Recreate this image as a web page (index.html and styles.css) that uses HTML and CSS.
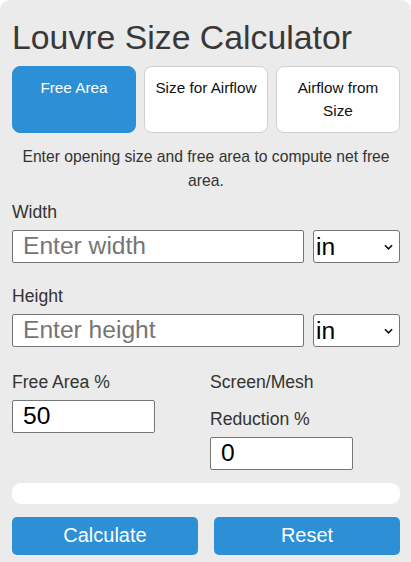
FILE: index.html
```html
<!DOCTYPE html>
<html lang="en">
<head>
<meta charset="utf-8">
<title>Louvre Size Calculator</title>
<link rel="stylesheet" href="styles.css">
</head>
<body>
<div class="calc">
  <h1 class="title">Louvre Size Calculator</h1>
  <div class="tabs">
    <button class="tab active">Free Area</button>
    <button class="tab">Size for Airflow</button>
    <button class="tab">Airflow from Size</button>
  </div>
  <p class="desc">Enter opening size and free area to compute net free area.</p>

  <div class="group">
    <label class="label">Width</label>
    <div class="row">
      <input class="field" type="text" placeholder="Enter width">
      <div class="select-wrap">
        <select class="unit"><option>in</option></select>
        <svg class="chev" viewBox="0 0 10 6" width="9" height="6"><path d="M1 1l4 4 4-4" fill="none" stroke="#111" stroke-width="1.8"/></svg>
      </div>
    </div>
  </div>

  <div class="group">
    <label class="label">Height</label>
    <div class="row">
      <input class="field" type="text" placeholder="Enter height">
      <div class="select-wrap">
        <select class="unit"><option>in</option></select>
        <svg class="chev" viewBox="0 0 10 6" width="9" height="6"><path d="M1 1l4 4 4-4" fill="none" stroke="#111" stroke-width="1.8"/></svg>
      </div>
    </div>
  </div>

  <div class="cols">
    <div class="col">
      <label class="label">Free Area %</label>
      <input class="field small" type="text" value="50">
    </div>
    <div class="col">
      <label class="label two"><span>Screen/Mesh</span><span>Reduction %</span></label>
      <input class="field small" type="text" value="0">
    </div>
  </div>

  <div class="result"></div>

  <div class="actions">
    <button class="btn">Calculate</button>
    <button class="btn">Reset</button>
  </div>
</div>
</body>
</html>
```
FILE: styles.css
```css
html, body {
  margin: 0;
  padding: 0;
  background: #ffffff;
}
body {
  font-family: "Liberation Sans", Arial, sans-serif;
  color: #333;
}
.calc {
  width: 411px;
  box-sizing: border-box;
  min-height: 580px;
  background: #eaebea;
  border-radius: 10px;
  padding: 18px 11px 0 12px;
}
.title {
  margin: 0;
  font-size: 33.8px;
  font-weight: normal;
  color: #383838;
  line-height: 38.6px;
}
.tabs {
  margin-top: 9px;
  display: grid;
  grid-template-columns: 1fr 1fr 1fr;
  gap: 8px;
}
.tab {
  font-family: inherit;
  font-size: 15.3px;
  line-height: 23px;
  padding: 9px 6px 10px;
  background: #fff;
  color: #111;
  border: 1px solid #d0d0d0;
  border-radius: 8px;
  text-align: center;
  align-self: stretch;
  display: flex;
  align-items: flex-start;
  justify-content: center;
  box-sizing: border-box;
  min-height: 66px;
}
.tab.active {
  background: #2d8fd5;
  border-color: #2d8fd5;
  color: #fff;
}
.desc {
  margin: 12px 0 0;
  font-size: 15.7px;
  line-height: 24px;
  text-align: center;
  color: #333;
}
.group {
  margin-top: 9px;
}
.group + .group {
  margin-top: 23px;
}
.label {
  display: block;
  font-size: 17.6px;
  line-height: 20px;
  color: #333;
  margin-bottom: 8px;
}
.label.two {
  display: flex;
  flex-direction: column;
  gap: 17px;
}
.row {
  display: flex;
  gap: 9px;
}
.field {
  flex: 1;
  min-width: 0;
  height: 33px;
  box-sizing: border-box;
  border: 1px solid #767676;
  border-radius: 2px;
  padding: 0 10px;
  font-family: inherit;
  font-size: 24.6px;
  color: #000;
  background: #fff;
}
.field::placeholder {
  color: #757575;
}
.select-wrap {
  position: relative;
  width: 87px;
}
.unit {
  appearance: none;
  -webkit-appearance: none;
  width: 100%;
  height: 33px;
  box-sizing: border-box;
  border: 1px solid #767676;
  border-radius: 3px;
  background: #fff;
  font-family: inherit;
  font-size: 24.6px;
  color: #000;
  padding: 0 2px;
}
.chev {
  position: absolute;
  right: 7px;
  top: 14px;
  pointer-events: none;
}
.cols {
  margin-top: 25px;
  display: grid;
  grid-template-columns: 1fr 1fr;
  gap: 8px;
}
.col {
  display: flex;
  flex-direction: column;
}
.field.small {
  flex: none;
  width: 143px;
}
.result {
  margin-top: 13px;
  height: 21px;
  background: #fff;
  border-radius: 9px;
}
.actions {
  margin-top: 13px;
  display: grid;
  grid-template-columns: 1fr 1fr;
  gap: 16px;
}
.btn {
  height: 38px;
  border: none;
  border-radius: 5px;
  background: #2d8fd5;
  color: #fff;
  font-family: inherit;
  font-size: 20px;
}
```
